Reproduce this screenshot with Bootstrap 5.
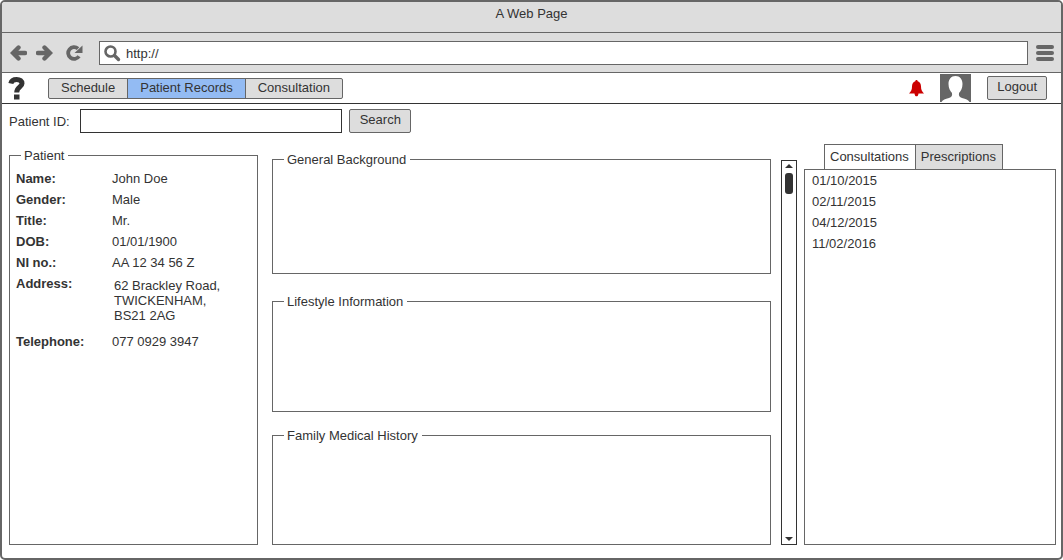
<!DOCTYPE html>
<html lang="en">
<head>
<meta charset="utf-8">
<meta name="viewport" content="width=device-width, initial-scale=1">
<title>A Web Page</title>
<link href="https://cdn.jsdelivr.net/npm/bootstrap@5.3.0/dist/css/bootstrap.min.css" rel="stylesheet">
<style>
  :root { --ink: #333; --frame: #666; --face: #ddd; --active: #93bbf3; }
  body { font: 13px/15px "Liberation Sans", Arial, sans-serif; color: var(--ink); background: #fff; }
  .window { border: 2px solid var(--frame); border-radius: 5px; overflow: hidden; }
  .titlebar { background: var(--face); border-bottom: 1px solid var(--frame); padding: 4px 0 11px; }
  .toolbar { background: var(--face); border-bottom: 1px solid var(--frame); padding: 8px 7px 7px 8px; }
  .glyph { display: block; flex: none; }
  .plain { border: 0; background: none; padding: 0; }
  .history { gap: 9px; margin-right: 13px; }
  .address { border: 1px solid var(--frame); background: #fff; height: 24px; padding-left: 4px; gap: 5px; }
  .address input { border: 0; outline: 0; padding: 0; color: var(--ink); min-width: 0; }
  .appbar { border-bottom: 1px solid var(--ink); height: 31px; padding: 0 14px 0 6px; }
  .face-btn, .face-btn:hover { --bs-btn-hover-color: var(--ink); font-size: 13px; line-height: 15px; color: var(--ink); background: var(--face); border: 1px solid var(--frame); border-radius: 2px; height: 24px; padding: 2px 9px 5px; }
  .views { margin-left: 22px; }
  .views .face-btn { height: 21px; padding: 1px 12px 3px; }
  .views .face-btn.active { background: var(--active); color: var(--ink); border-color: var(--frame); }
  .lookup { padding: 5px 7px 0; }
  .lookup input { width: 262px; height: 24px; border: 1px solid var(--ink); padding: 0 4px; margin: 0 7px 0 10px; }
  .lookup .face-btn { padding-left: 10px; }
  .panes { padding: 15px 5px 13px 7px; }
  .pane-side { flex: 247 1 0; min-width: 0; }
  .pane-mid { flex: 499 1 0; min-width: 0; padding-top: 4px; margin-left: 14px; }
  .pane-tabs { flex: 252 1 0; min-width: 0; margin-left: 7px; }
  .group { border: 1px solid var(--frame); }
  .group legend { float: none; width: auto; font-size: 13px; line-height: 15px; margin: 0 0 0 11px; padding: 0 4px 0 3px; }
  .note-a { flex: 122 1 0; margin-bottom: 20px; }
  .note-b { flex: 118 1 0; margin-bottom: 16px; }
  .note-c { flex: 117 1 0; }
  .details th, .details td { height: 21px; padding: 3px 0; vertical-align: top; }
  .details th { width: 96px; }
  .details { margin: 5px 0 0 6px; }
  .details .tall td { height: 58px; padding: 5px 2px; }
  .scroller { flex: none; width: 16px; border: 1px solid var(--ink); margin: 12px 0 0 10px; padding: 3px 0; }
  .thumb { width: 8px; height: 21px; border-radius: 3px; background: var(--ink); margin-top: 5px; }
  .sheet-tabs { padding-left: 20px; margin-top: -4px; }
  .sheet-tabs .nav-link { font-size: 13px; line-height: 15px; color: var(--ink); border: 1px solid var(--frame); border-bottom: 0; border-radius: 0; padding: 4px 6px 5px 5px; background: var(--face); }
  .sheet-tabs .nav-link.active { background: #fff; border-right: 0; }
  .sheet { border: 1px solid var(--frame); }
  .sheet li { padding: 3px 7px; height: 21px; }
</style>
</head>
<body>
<div class="window d-flex flex-column min-vh-100">
  <header>
    <div class="titlebar text-center">A Web Page</div>
    <div class="toolbar d-flex align-items-center">
      <div class="history d-flex">
        <button class="plain" type="button" aria-label="Back"><svg class="glyph" width="17" height="16" viewBox="0 0 17 16" fill="none" stroke="#666" stroke-width="4.400" stroke-linecap="round"><path d="M8.500 2.500L3 8L8.500 13.500M4 8H15"/></svg></button>
        <button class="plain" type="button" aria-label="Forward"><svg class="glyph" width="17" height="16" viewBox="0 0 17 16" fill="none" stroke="#666" stroke-width="4.400" stroke-linecap="round"><path d="M8.500 2.500L14 8L8.500 13.500M13 8H2"/></svg></button>
      </div>
      <button class="plain" type="button" aria-label="Reload"><svg class="glyph" width="17" height="16" viewBox="0 0 17 16"><path d="M13 11.300A5.900 5.900 0 1 1 12 3.600" fill="none" stroke="#666" stroke-width="3.800"/><path d="M16.500 .5V8H8.500Z" fill="#666"/></svg></button>
      <label class="address d-flex align-items-center flex-grow-1 ms-3">
        <svg class="glyph" width="17" height="17" viewBox="0 0 17 17" fill="none" stroke="#666"><circle cx="6.500" cy="6.500" r="5" stroke-width="2.600"/><path d="M10.500 10.500L14.500 14.500" stroke-width="3.400" stroke-linecap="round"/></svg>
        <input class="flex-grow-1" type="text" value="http://" aria-label="Address">
      </label>
      <button class="plain ms-2" type="button" aria-label="Menu"><svg class="glyph" width="18" height="16" viewBox="0 0 18 16" fill="#666"><rect width="18" height="4" rx="2"/><rect y="6" width="18" height="4" rx="2"/><rect y="12" width="18" height="4" rx="2"/></svg></button>
    </div>
  </header>
  <nav class="appbar d-flex align-items-center">
    <button class="plain" type="button" aria-label="Help"><svg class="glyph" width="18" height="24" viewBox="0 0 18 24"><path d="M2.800 7.500C3.500 4.500 6 3.500 8.700 3.500C12 3.500 14 5 14 7.500C14 11 8.700 11 8.700 16.500" fill="none" stroke="#333" stroke-width="5"/><rect x="6" y="18.500" width="5.500" height="5" fill="#333"/></svg></button>
    <div class="views btn-group">
      <button class="btn face-btn" type="button">Schedule</button>
      <button class="btn face-btn active" type="button" aria-current="page">Patient Records</button>
      <button class="btn face-btn" type="button">Consultation</button>
    </div>
    <button class="plain ms-auto" type="button" aria-label="Alerts"><svg class="glyph" width="15" height="17" viewBox="0 0 15 17" fill="#c00"><path d="M7.500 0C8.300 0 8.700 .6 8.700 1.300C11 2 12 4 12 6.500C12 10 13 11.500 15 13.500H0C2 11.500 3 10 3 6.500C3 4 4 2 6.300 1.300C6.300 .6 6.700 0 7.500 0ZM5.500 13.500H9.500C9.300 15.700 8.500 16.300 7.500 16.300S5.700 15.700 5.500 13.500Z"/></svg></button>
    <svg class="glyph ms-3" width="31" height="28" viewBox="0 0 31 28" role="img" aria-label="User"><path d="M0 0H31V28H0Z" fill="#666"/><path d="M15.500 2C20 2 22.500 5.500 22.500 10C22.500 14 21 17 19 19C18.500 22 19.500 23 22 24C26 25 28 25.500 29.500 28H1.500C3 25.500 5 25 9 24C11.500 23 12.500 22 12 19C10 17 8.500 14 8.500 10C8.500 5.500 11 2 15.500 2Z" fill="#fff"/></svg>
    <button class="btn face-btn ms-3" type="button">Logout</button>
  </nav>
  <form class="lookup d-flex align-items-center">
    <label for="patient-id">Patient ID:</label>
    <input id="patient-id" type="text">
    <button class="btn face-btn" type="button">Search</button>
  </form>
  <main class="panes d-flex flex-grow-1 align-items-stretch">
    <fieldset class="group pane-side">
      <legend>Patient</legend>
      <table class="details">
        <tr><th scope="row">Name:</th><td>John Doe</td></tr>
        <tr><th scope="row">Gender:</th><td>Male</td></tr>
        <tr><th scope="row">Title:</th><td>Mr.</td></tr>
        <tr><th scope="row">DOB:</th><td>01/01/1900</td></tr>
        <tr><th scope="row">NI no.:</th><td>AA 12 34 56 Z</td></tr>
        <tr class="tall"><th scope="row">Address:</th><td>62 Brackley Road,<br>TWICKENHAM,<br>BS21 2AG</td></tr>
        <tr><th scope="row">Telephone:</th><td>077 0929 3947</td></tr>
      </table>
    </fieldset>
    <div class="pane-mid d-flex flex-column">
      <fieldset class="group note-a"><legend>General Background</legend></fieldset>
      <fieldset class="group note-b"><legend>Lifestyle Information</legend></fieldset>
      <fieldset class="group note-c"><legend>Family Medical History</legend></fieldset>
    </div>
    <div class="scroller d-flex flex-column align-items-center" aria-hidden="true">
      <svg class="glyph" width="8" height="4" viewBox="0 0 8 4" fill="#333"><path d="M4 0L8 4H0Z"/></svg>
      <div class="thumb"></div>
      <svg class="glyph mt-auto" width="8" height="4" viewBox="0 0 8 4" fill="#333"><path d="M4 4L0 0H8Z"/></svg>
    </div>
    <section class="pane-tabs d-flex flex-column">
      <div class="sheet-tabs nav" role="tablist">
        <button class="nav-link active" type="button" role="tab" aria-selected="true">Consultations</button>
        <button class="nav-link" type="button" role="tab" aria-selected="false">Prescriptions</button>
      </div>
      <ul class="sheet list-unstyled mb-0 flex-grow-1">
        <li>01/10/2015</li>
        <li>02/11/2015</li>
        <li>04/12/2015</li>
        <li>11/02/2016</li>
      </ul>
    </section>
  </main>
</div>
<script src="https://cdn.jsdelivr.net/npm/bootstrap@5.3.0/dist/js/bootstrap.bundle.min.js"></script>
</body>
</html>
